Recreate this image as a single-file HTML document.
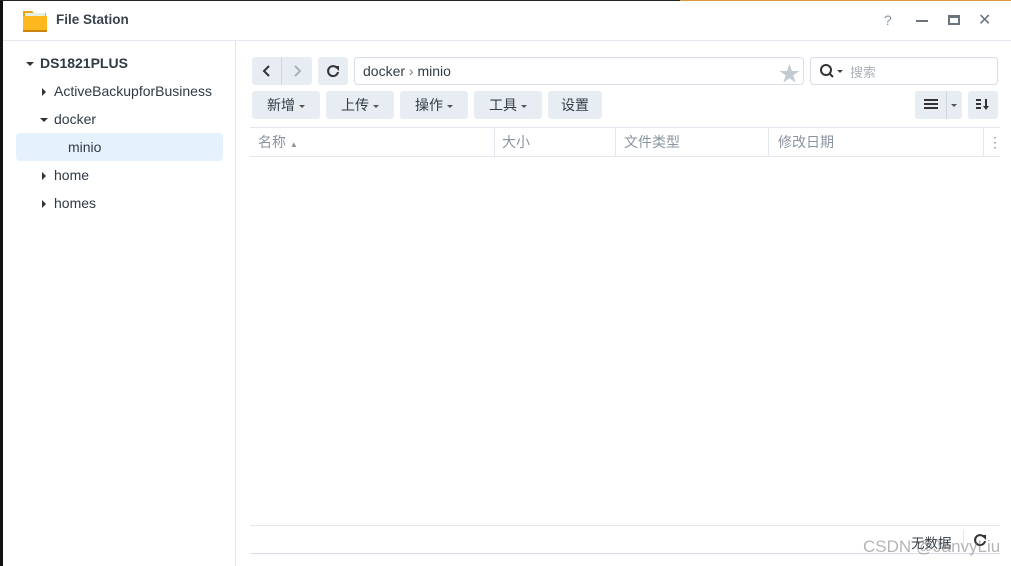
<!DOCTYPE html>
<html><head><meta charset="utf-8"><style>
*{margin:0;padding:0;box-sizing:border-box}
body{width:1011px;height:566px;overflow:hidden;background:#fff;font-family:"Liberation Sans","Noto Sans CJK SC",sans-serif;position:relative;color:#414b55}
.a{position:absolute}
.btn{position:absolute;background:#e8edf3;border-radius:3px;font-size:14px;color:#333c45;text-align:center;line-height:28px;height:28px}
.car{display:inline-block;width:0;height:0;border-left:3px solid transparent;border-right:3px solid transparent;border-top:3px solid #555;vertical-align:middle;margin-left:4px}
.tri-r{position:absolute;width:0;height:0;border-top:4px solid transparent;border-bottom:4px solid transparent;border-left:4px solid #333}
.tri-d{position:absolute;width:0;height:0;border-left:4px solid transparent;border-right:4px solid transparent;border-top:4px solid #333}
.tree{position:absolute;font-size:14px;color:#2f3a44}
.th{position:absolute;top:128px;height:28px;line-height:28px;font-size:14px;color:#8a949e}
</style></head><body>
<div class="a" style="left:0;top:0;width:3px;height:566px;background:#111"></div>
<div class="a" style="left:0;top:0;width:1011px;height:1px;background:#222"></div>
<div class="a" style="left:680px;top:0;width:331px;height:1px;background:#d89a3a"></div>
<svg class="a" style="left:22px;top:8px" width="26" height="26" viewBox="0 0 26 26"><path d="M1 3h9l2 2h12v19H1z" fill="#e9a312"/><rect x="3" y="5" width="20" height="6" fill="#e6f0e0"/><path d="M1 8h24v15H1z" fill="#fdb81e"/><path d="M1 22h24v2H1z" fill="#c98410"/></svg>
<div class="a" style="left:56px;top:12px;font-size:13.5px;font-weight:bold;color:#3a434c">File Station</div>
<div class="a" style="left:884px;top:12px;font-size:14px;color:#8a949e">?</div>
<div class="a" style="left:916px;top:20px;width:12px;height:2px;background:#6b747d"></div>
<div class="a" style="left:948px;top:15px;width:12px;height:10px;border:2px solid #6b747d;border-top-width:3px"></div>
<div class="a" style="left:978px;top:10px;font-size:16px;color:#6b747d">✕</div>
<div class="a" style="left:3px;top:40px;width:1008px;height:1px;background:#e3e8ee"></div>
<div class="a" style="left:235px;top:41px;width:1px;height:525px;background:#e3e8ee"></div>
<div class="tri-d" style="left:26px;top:62px"></div>
<div class="tree" style="left:40px;top:55px;font-weight:bold;font-size:14px">DS1821PLUS</div>
<div class="tri-r" style="left:42px;top:88px"></div>
<div class="tree" style="left:54px;top:83px">ActiveBackupforBusiness</div>
<div class="tri-d" style="left:40px;top:118px"></div>
<div class="tree" style="left:54px;top:111px">docker</div>
<div class="a" style="left:16px;top:133px;width:207px;height:28px;background:#e5f1fc;border-radius:4px"></div>
<div class="tree" style="left:68px;top:139px">minio</div>
<div class="tri-r" style="left:42px;top:172px"></div>
<div class="tree" style="left:54px;top:167px">home</div>
<div class="tri-r" style="left:42px;top:200px"></div>
<div class="tree" style="left:54px;top:195px">homes</div>
<div class="btn" style="left:252px;top:57px;width:60px"></div>
<div class="a" style="left:281px;top:57px;width:1px;height:28px;background:#d0d6dd"></div>
<svg class="a" style="left:260px;top:63px" width="14" height="16"><path d="M9 3L4 8l5 5" stroke="#333" stroke-width="2" fill="none"/></svg>
<svg class="a" style="left:290px;top:63px" width="14" height="16"><path d="M5 3l5 5-5 5" stroke="#aab2ba" stroke-width="2" fill="none"/></svg>
<div class="btn" style="left:318px;top:57px;width:30px"></div>
<svg class="a" style="left:325px;top:63px" width="16" height="16"><path d="M12 5A5 5 0 1 0 13 9" stroke="#333" stroke-width="2" fill="none"/><path d="M9 3h5v5z" fill="#333"/></svg>
<div class="a" style="left:354px;top:57px;width:450px;height:28px;border:1px solid #d8dee5;border-radius:4px"></div>
<div class="a" style="left:363px;top:63px;font-size:14px;color:#333c45">docker <span style="color:#777">›</span> minio</div>
<div class="a" style="left:779px;top:58px;font-size:21px;color:#c3cad2">★</div>
<div class="a" style="left:810px;top:57px;width:188px;height:28px;border:1px solid #d8dee5;border-radius:4px"></div>
<svg class="a" style="left:819px;top:63px" width="16" height="16"><circle cx="7" cy="7" r="5" stroke="#333" stroke-width="2" fill="none"/><path d="M10.5 10.5L14 14" stroke="#333" stroke-width="2"/></svg>
<div class="a" style="left:837px;top:70px;width:0;height:0;border-left:3px solid transparent;border-right:3px solid transparent;border-top:3px solid #444"></div>
<div class="a" style="left:850px;top:62px;font-size:13px;color:#aab2ba">搜索</div>
<div class="btn" style="left:252px;top:91px;width:68px">新增<span class="car"></span></div>
<div class="btn" style="left:326px;top:91px;width:68px">上传<span class="car"></span></div>
<div class="btn" style="left:400px;top:91px;width:68px">操作<span class="car"></span></div>
<div class="btn" style="left:474px;top:91px;width:68px">工具<span class="car"></span></div>
<div class="btn" style="left:548px;top:91px;width:54px">设置</div>
<div class="btn" style="left:915px;top:91px;width:47px"></div>
<div class="a" style="left:946px;top:91px;width:1px;height:28px;background:#d0d6dd"></div>
<div class="a" style="left:924px;top:99px;width:14px;height:2px;background:#333;box-shadow:0 4px 0 #333,0 8px 0 #333"></div>
<div class="a" style="left:951px;top:104px;width:0;height:0;border-left:3px solid transparent;border-right:3px solid transparent;border-top:3px solid #555"></div>
<div class="btn" style="left:968px;top:91px;width:30px"></div>
<svg class="a" style="left:975px;top:97px" width="16" height="16"><path d="M1 3h5M1 7h5M1 11h5" stroke="#333" stroke-width="2"/><path d="M11 2v9" stroke="#333" stroke-width="2"/><path d="M8 9h6l-3 4z" fill="#333"/></svg>
<div class="a" style="left:250px;top:127px;width:750px;height:1px;background:#e3e8ee"></div>
<div class="a" style="left:250px;top:156px;width:750px;height:1px;background:#e3e8ee"></div>
<div class="a" style="left:494px;top:128px;width:1px;height:28px;background:#e3e8ee"></div>
<div class="a" style="left:615px;top:128px;width:1px;height:28px;background:#e3e8ee"></div>
<div class="a" style="left:768px;top:128px;width:1px;height:28px;background:#e3e8ee"></div>
<div class="a" style="left:983px;top:128px;width:1px;height:28px;background:#e3e8ee"></div>
<div class="th" style="left:258px">名称 <span style="font-size:8px">▲</span></div>
<div class="th" style="left:502px">大小</div>
<div class="th" style="left:624px">文件类型</div>
<div class="th" style="left:778px">修改日期</div>
<div class="th" style="left:988px">⋮</div>
<div class="a" style="left:250px;top:525px;width:750px;height:1px;background:#e3e8ee"></div>
<div class="a" style="left:250px;top:553px;width:750px;height:1px;background:#d8dee5"></div>
<div class="a" style="left:911px;top:532px;font-size:13.5px;color:#333c45">无数据</div>
<div class="a" style="left:963px;top:530px;width:1px;height:20px;background:#e3e8ee"></div>
<svg class="a" style="left:972px;top:532px" width="16" height="16"><path d="M12 5A5 5 0 1 0 13 9" stroke="#333" stroke-width="2" fill="none"/><path d="M9 3h5v5z" fill="#333"/></svg>
<div class="a" style="left:863px;top:537px;font-size:17px;color:rgba(120,120,120,0.55)">CSDN @JanvyLiu</div>
</body></html>
